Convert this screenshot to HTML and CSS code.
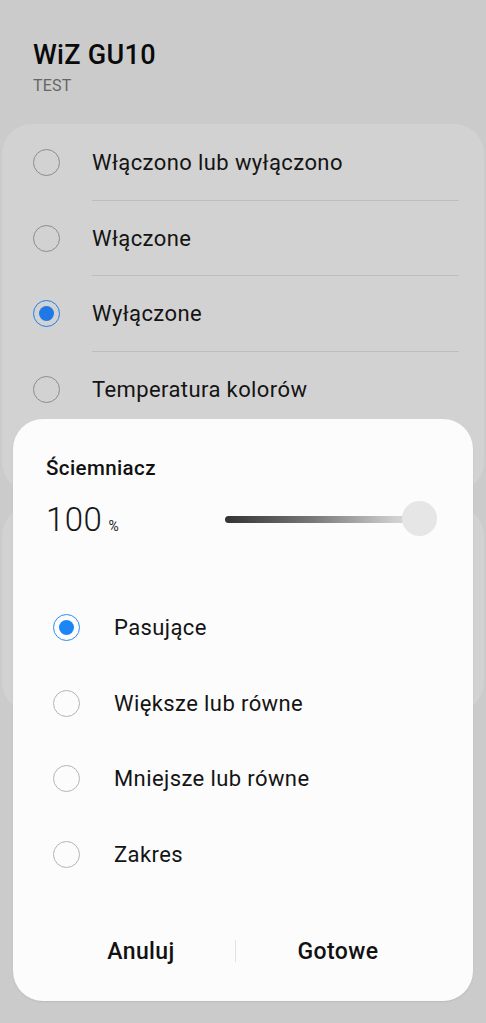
FILE: index.html
```html
<!DOCTYPE html>
<html lang="pl">
<head>
<meta charset="utf-8">
<link rel="stylesheet" href="styles.css">
</head>
<body>
<div class="screen">
  <header class="header">
    <h1 class="title">WiZ GU10</h1>
    <div class="subtitle">TEST</div>
  </header>
  <section class="card">
    <div class="row"><span class="radio"></span><span class="label">Włączono lub wyłączono</span></div>
    <div class="row"><span class="radio"></span><span class="label">Włączone</span></div>
    <div class="row"><span class="radio checked"></span><span class="label">Wyłączone</span></div>
    <div class="row last"><span class="radio"></span><span class="label">Temperatura kolorów</span></div>
  </section>
  <section class="card card2"></section>

  <div class="dialog">
    <div class="dlg-title">Ściemniacz</div>
    <div class="value-row">
      <div class="value"><span class="num">100</span><span class="pct">%</span></div>
      <div class="slider"><div class="track"></div><div class="thumb"></div></div>
    </div>
    <div class="options">
      <div class="opt"><span class="radio light checked"></span><span class="label">Pasujące</span></div>
      <div class="opt"><span class="radio light"></span><span class="label">Większe lub równe</span></div>
      <div class="opt"><span class="radio light"></span><span class="label">Mniejsze lub równe</span></div>
      <div class="opt"><span class="radio light"></span><span class="label">Zakres</span></div>
    </div>
    <div class="buttons">
      <div class="btn btn-left">Anuluj</div>
      <div class="sep"></div>
      <div class="btn btn-right">Gotowe</div>
    </div>
  </div>
</div>
</body>
</html>
```

FILE: styles.css
```css
* { box-sizing: border-box; }
html, body { margin: 0; padding: 0; }
body {
  background: #cbcbcb;
  font-family: Roboto, "Noto Sans", sans-serif;
  color: #111;
  width: 486px;
  height: 1023px;
  overflow: hidden;
}
.screen { position: relative; width: 486px; height: 1023px; }
.header { padding: 38px 33px 0 33px; height: 124px; }
.title { margin: 0; font-size: 27px; font-weight: 500; line-height: 34px; color: #0a0a0a; letter-spacing: 0.3px; }
.subtitle { font-size: 16px; color: #666; line-height: 20px; margin-top: 4px; letter-spacing: 0.2px; }

.card {
  margin: 0 2px;
  background: #d2d2d2;
  border-radius: 30px;
  height: 368px;
  padding-top: 1px;
}
.card2 { margin-top: 14px; height: 206px; }

.row {
  display: flex;
  align-items: center;
  height: 75.5px;
  padding-left: 31px;
  position: relative;
}
.row::after {
  content: "";
  position: absolute;
  left: 90px;
  right: 25px;
  bottom: 0;
  height: 1px;
  background: #bdbdbd;
}
.row.last::after { display: none; }
.row .label { margin-left: 32px; font-size: 22px; letter-spacing: 0.4px; color: #141414; }

.radio {
  width: 27px; height: 27px;
  border-radius: 50%;
  border: 1.5px solid #8c8c8c;
  flex: none;
  position: relative;
}
.radio.light { border-color: #b4b4b4; }
.radio.checked { border-color: #1f7fe8; }
.radio.checked::after {
  content: "";
  position: absolute;
  left: 50%; top: 50%;
  width: 15px; height: 15px;
  margin: -7.5px 0 0 -7.5px;
  border-radius: 50%;
  background: #1e78e6;
}
.radio.light.checked { border-color: #2a8cf4; }
.radio.light.checked::after { background: #1c86f5; }

.dialog {
  position: absolute;
  left: 13px; top: 419px;
  width: 460px; height: 582px;
  background: #fcfcfc;
  border-radius: 30px;
  padding: 36px 0 0 33px;
  display: flex;
  flex-direction: column;
  box-shadow: 0 1px 2px rgba(0,0,0,0.08);
}
.dlg-title { font-size: 20.5px; font-weight: 500; line-height: 26px; color: #111; letter-spacing: 0.4px; }
.value-row { display: flex; align-items: center; margin-top: 18px; height: 40px; }
.value { width: 179px; display: flex; align-items: baseline; }
.num { font-size: 33px; font-weight: 300; color: #161616; letter-spacing: 0.5px; }
.pct { font-size: 14px; margin-left: 6px; color: #222; }
.slider { position: relative; width: 212px; height: 36px; display: flex; align-items: center; }
.track {
  width: 200px; height: 7px; border-radius: 4px;
  background: linear-gradient(to right, #333 0%, #7a7a7a 45%, #cfcfcf 85%, #e0e0e0 100%);
}
.thumb {
  position: absolute; right: 0; top: 0;
  width: 35px; height: 35px; border-radius: 50%;
  background: #e6e6e6;
}
.options { margin-top: 51px; padding-left: 7px; }
.opt { display: flex; align-items: center; height: 75.5px; }
.opt .label { margin-left: 34px; font-size: 22px; letter-spacing: 0.4px; color: #141414; }

.buttons {
  margin-top: auto;
  margin-left: -33px;
  height: 100px;
  display: flex;
  align-items: center;
  padding-bottom: 0;
}
.btn { text-align: center; font-size: 23px; font-weight: 500; color: #111; letter-spacing: 0.4px; }
.btn-left { width: 222px; padding-left: 34px; }
.btn-right { flex: 1; padding-right: 33px; }
.sep { width: 1px; height: 22px; background: #e2e2e2; }
```
